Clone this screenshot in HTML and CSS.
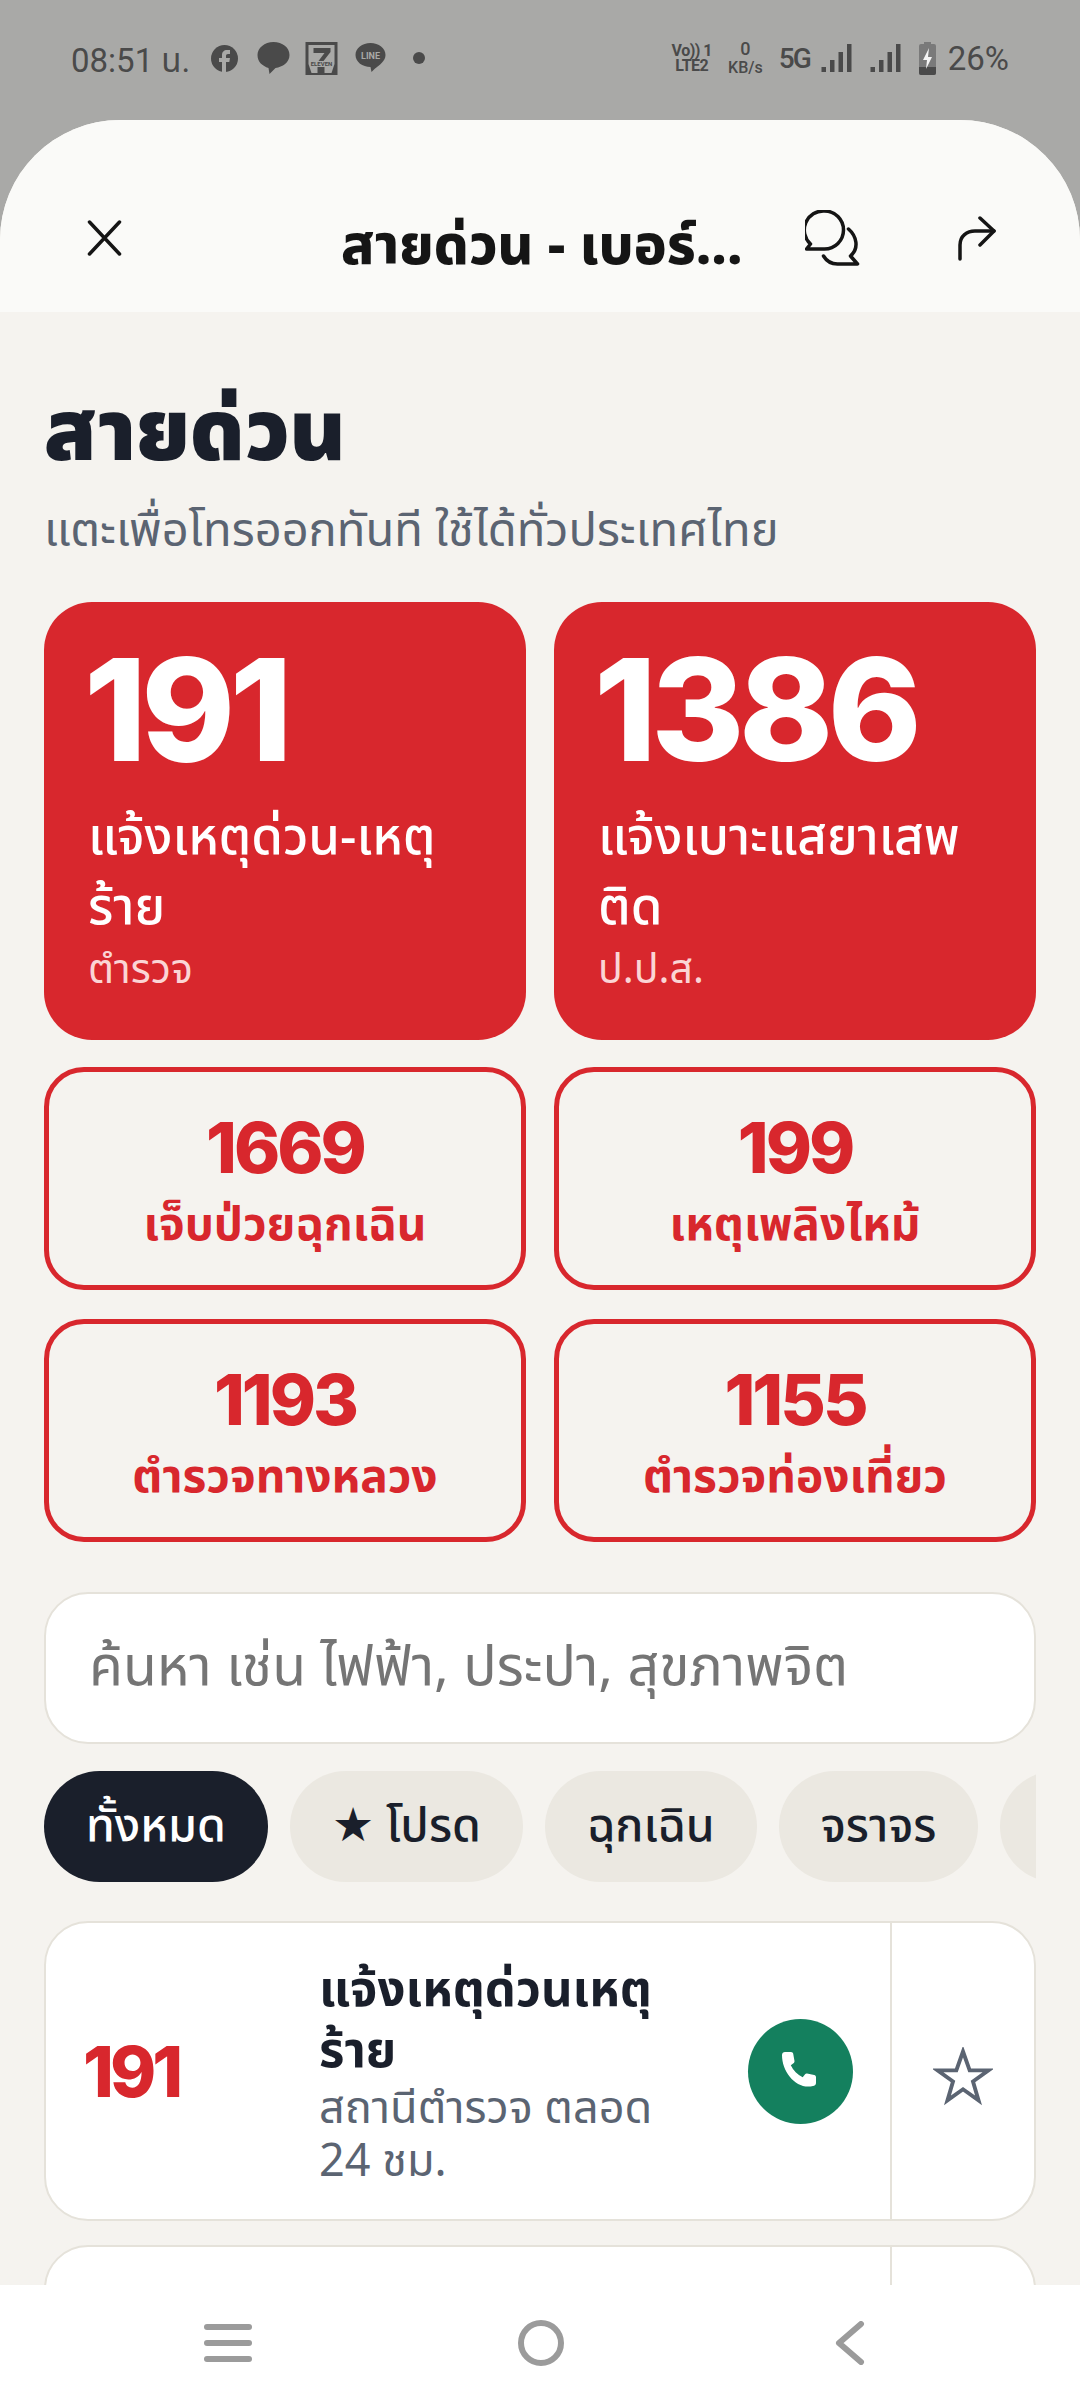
FILE: index.html
```html
<!DOCTYPE html>
<html lang="th">
<head>
    <meta charset="UTF-8">
    <meta name="viewport" content="width=device-width, initial-scale=1.0">
    <title>สายด่วน</title>
    <link rel="stylesheet" href="styles.css">
</head>
<body>
    <div class="phone">
        <div class="status-bar">
            <div class="status-left">
                <span class="clock">08:51 น.</span>
                <svg class="ic-fb" viewBox="0 0 27 27"><circle cx="13.500" cy="13.500" r="13.500" fill="#4a4a4a"/><path d="M11 27V17H8v-4h3v-3c0-3 2-5 5-5h3v4h-2c-1.300 0-2 .7-2 2v2h4l-.7 4H15v10z" fill="#a9a9a7"/></svg>
                <svg class="ic-bubble" viewBox="0 0 32 32"><path d="M16 0c9 0 16 5.500 16 13s-7 12-14 13l-6 6-1-6C5 24 0 20 0 13S7 0 16 0z" fill="#4a4a4a"/></svg>
                <svg class="ic-seven" viewBox="0 0 32 33"><rect width="32" height="33" fill="#4a4a4a"/><path d="M3 3h26v19l-3 9H6l-3-9z" fill="#a9a9a7"/><path d="M8 6h17v4l-7 9h-5l6-8H8z" fill="#4a4a4a"/><text x="16" y="24" class="seven-text">ELEVEN</text><rect x="12" y="25" width="7" height="7" fill="#4a4a4a"/></svg>
                <svg class="ic-line" viewBox="0 0 30 30"><path d="M15 0c8.300 0 15 5.200 15 12 0 6-6 10-11 14l-3 3-1-5C7 24 0 19 0 12 0 5.200 6.700 0 15 0z" fill="#4a4a4a"/><text x="15" y="16" class="line-text">LINE</text></svg>
                <span class="status-dot"></span>
            </div>
            <div class="status-right">
                <div class="volte"><span>Vo)) 1</span><span>LTE2</span></div>
                <div class="speed"><span>0</span><span>KB/s</span></div>
                <span class="net">5G</span>
                <svg class="ic-signal" viewBox="0 0 30 28"><rect x="0" y="23" width="4.500" height="5"/><rect x="8.500" y="16" width="4.500" height="12"/><rect x="17" y="8" width="4.500" height="20"/><rect x="25.500" y="0" width="4.500" height="28"/></svg>
                <svg class="ic-signal" viewBox="0 0 30 28"><rect x="0" y="23" width="4.500" height="5"/><rect x="8.500" y="16" width="4.500" height="12"/><rect x="17" y="8" width="4.500" height="20"/><rect x="25.500" y="0" width="4.500" height="28"/></svg>
                <svg class="ic-battery" viewBox="0 0 17 33"><path d="M5 0h7v2h3a2 2 0 0 1 2 2v27a2 2 0 0 1-2 2H2a2 2 0 0 1-2-2V4a2 2 0 0 1 2-2h3z" fill="#7a7a7a"/><path d="M0 25h17v6a2 2 0 0 1-2 2H2a2 2 0 0 1-2-2z" fill="#4a4a4a"/><path d="M10 6l-6 12h4l-1 9 6-12H9z" fill="#f4f4f4"/></svg>
                <span class="battery-pct">26%</span>
            </div>
        </div>

        <div class="sheet">
            <header class="sheet-head">
                <svg class="ic-close" viewBox="0 0 34 36"><path d="M2 2l30 32M32 2L2 34"/></svg>
                <div class="sheet-title">สายด่วน - เบอร์...</div>
                <svg class="ic-chat" viewBox="0 0 54 56"><path d="M19 1a19 19 0 0 1 0 38H1l4-5A19 19 0 0 1 19 1z"/><path d="M43 19c8 7 11 19 2 27l7 8H32c-6 0-11-3-14-8"/></svg>
                <svg class="ic-share" viewBox="0 0 38 45"><path d="M2 43V29c0-9 7-14 15-14h19"/><path d="M22 2l14 13-14 14"/></svg>
            </header>

            <main class="content">
                <h1 class="page-title">สายด่วน</h1>
                <p class="page-sub">แตะเพื่อโทรออกทันที ใช้ได้ทั่วประเทศไทย</p>

                <div class="hot-grid">
                    <div class="hot-card">
                        <div class="hot-num">191</div>
                        <div class="hot-name">แจ้งเหตุด่วน-เหตุร้าย</div>
                        <div class="hot-org">ตำรวจ</div>
                    </div>
                    <div class="hot-card">
                        <div class="hot-num">1386</div>
                        <div class="hot-name">แจ้งเบาะแสยาเสพติด</div>
                        <div class="hot-org">ป.ป.ส.</div>
                    </div>
                </div>

                <div class="line-grid">
                    <div class="line-card"><div class="line-num">1669</div><div class="line-name">เจ็บป่วยฉุกเฉิน</div></div>
                    <div class="line-card"><div class="line-num">199</div><div class="line-name">เหตุเพลิงไหม้</div></div>
                    <div class="line-card"><div class="line-num">1193</div><div class="line-name">ตำรวจทางหลวง</div></div>
                    <div class="line-card"><div class="line-num">1155</div><div class="line-name">ตำรวจท่องเที่ยว</div></div>
                </div>

                <div class="search">ค้นหา เช่น ไฟฟ้า, ประปา, สุขภาพจิต</div>

                <div class="chips">
                    <span class="chip active">ทั้งหมด</span>
                    <span class="chip">★ โปรด</span>
                    <span class="chip">ฉุกเฉิน</span>
                    <span class="chip">จราจร</span>
                    <span class="chip chip-cut"></span>
                </div>

                <div class="row-card">
                    <div class="row-main">
                        <div class="row-num">191</div>
                        <div class="row-text">
                            <div class="row-name">แจ้งเหตุด่วนเหตุร้าย</div>
                            <div class="row-desc">สถานีตำรวจ ตลอด 24 ชม.</div>
                        </div>
                        <div class="call-btn">
                            <svg viewBox="0 0 38 38"><path d="M3 0h6c1.200 0 2 .7 2.200 1.800l1.300 7.200c.1.800-.1 1.400-.7 1.900l-3 2.400c2.500 5.300 6.600 9.500 11.900 12l2.400-3c.5-.6 1.100-.8 1.900-.7l7.200 1.300c1.100.2 1.800 1 1.800 2.200v6c0 1.700-1.300 2.900-3 2.900C15 38 0 21 0 3c0-1.700 1.300-3 3-3z"/></svg>
                        </div>
                    </div>
                    <div class="row-fav">
                        <svg viewBox="0 0 54 53"><path d="M27 4l6 17h17L36 31l5 17-14-10-14 10 5-17L4 21h17z"/></svg>
                    </div>
                </div>
                <div class="row-card"><div class="row-main"></div><div class="row-fav"></div></div>
            </main>
        </div>

        <nav class="nav-bar">
            <svg class="ic-menu" viewBox="0 0 48 38"><rect y="0" width="48" height="6" rx="3"/><rect y="16" width="48" height="6" rx="3"/><rect y="32" width="48" height="6" rx="3"/></svg>
            <svg class="ic-home" viewBox="0 0 46 46"><circle cx="23" cy="23" r="20"/></svg>
            <svg class="ic-back" viewBox="0 0 30 44"><path d="M26 3L4 22l22 19"/></svg>
        </nav>
    </div>
</body>
</html>
```

FILE: styles.css
```css
* {
    box-sizing: border-box;
}
body, html {
    margin: 0;
    padding: 0;
    height: 2400px;
    overflow: hidden;
    background-color: #a9a9a7;
    font-family: 'Noto Sans', 'Noto Sans Thai', sans-serif;
}
.phone {
    display: flex;
    flex-direction: column;
    width: 1080px;
    height: 2400px;
}

/* status bar */
.status-bar {
    flex: 0 0 120px;
    display: flex;
    justify-content: space-between;
    padding: 36px 71px 0 71px;
    color: #4a4a4a;
    font-family: Roboto, 'Noto Sans Thai', sans-serif;
}
.status-left, .status-right {
    display: flex;
    align-items: center;
    height: 44px;
}
.clock {
    width: 140px;
    font-size: 33px;
    padding-top: 8px;
    white-space: nowrap;
}
.ic-fb {
    width: 27px;
    height: 27px;
    margin-right: 19px;
}
.ic-bubble {
    width: 33px;
    height: 32px;
    margin-right: 15px;
}
.ic-seven {
    width: 33px;
    height: 33px;
    margin-right: 17px;
}
.seven-text {
    font-size: 6px;
    font-weight: 700;
    fill: #4a4a4a;
    text-anchor: middle;
}
.ic-line {
    width: 31px;
    height: 30px;
    margin-right: 27px;
}
.line-text {
    font-size: 9px;
    font-weight: 700;
    fill: #a9a9a7;
    text-anchor: middle;
}
.status-dot {
    width: 12px;
    height: 12px;
    border-radius: 50%;
    background-color: #4a4a4a;
}
.volte, .speed {
    display: flex;
    flex-direction: column;
    align-items: center;
    font-weight: 700;
    margin-right: 16px;
    white-space: nowrap;
}
.volte {
    font-size: 16px;
    line-height: 15px;
    letter-spacing: -0.5px;
}
.speed {
    font-size: 16px;
    line-height: 19px;
    font-weight: 500;
}
.speed span:first-child {
    font-size: 18px;
}
.net {
    font-size: 28px;
    font-weight: 500;
    letter-spacing: -2px;
    margin-right: 11px;
}
.ic-signal {
    width: 31px;
    height: 28px;
    margin-right: 18px;
    fill: #4a4a4a;
}
.ic-battery {
    width: 17px;
    height: 33px;
    margin-right: 12px;
}
.battery-pct {
    font-size: 33px;
}

/* sheet */
.sheet {
    flex: 1;
    min-height: 0;
    display: flex;
    flex-direction: column;
    background-color: #f5f3ef;
    border-radius: 120px 120px 0 0;
    overflow: hidden;
}
.sheet-head {
    flex: 0 0 192px;
    display: flex;
    align-items: center;
    background-color: #fafaf8;
    padding: 44px 0 0 87px;
}
.ic-close {
    flex: none;
    width: 35px;
    height: 36px;
    fill: none;
    stroke: #151515;
    stroke-width: 3.500;
    stroke-linecap: round;
}
.sheet-title {
    flex: 0 0 397px;
    min-width: 0;
    margin-left: 219px;
    padding-top: 10px;
    font-size: 55px;
    line-height: 70px;
    font-weight: 800;
    color: #151515;
    white-space: nowrap;
}
.ic-chat {
    flex: none;
    width: 55px;
    height: 56px;
    margin-left: 67px;
    fill: none;
    stroke: #151515;
    stroke-width: 3.500;
    stroke-linecap: round;
    stroke-linejoin: round;
}
.ic-share {
    flex: none;
    width: 38px;
    height: 45px;
    margin-left: 98px;
    fill: none;
    stroke: #151515;
    stroke-width: 3.500;
    stroke-linecap: round;
    stroke-linejoin: round;
}
.content {
    flex: 1;
    min-height: 0;
    overflow: hidden;
    padding: 65px 44px 0;
}
.page-title {
    margin: 0;
    font-size: 85px;
    line-height: 100px;
    font-weight: 900;
    color: #1a1f2b;
}
.page-sub {
    margin: 21px 0 0;
    font-size: 47px;
    line-height: 60px;
    color: #5b6472;
    white-space: nowrap;
}

/* big cards */
.hot-grid, .line-grid {
    display: grid;
    grid-template-columns: 482px 482px;
    gap: 29px 28px;
}
.hot-grid {
    margin-top: 44px;
}
.hot-card {
    height: 438px;
    padding: 32px 44px;
    background-color: #d8272d;
    border-radius: 48px;
    color: #fff;
}
.hot-num {
    margin-left: -4px;
    font-family: Inter, sans-serif;
    font-size: 142px;
    line-height: 150px;
    font-weight: 800;
    letter-spacing: -5.500px;
}
.hot-name {
    margin-top: 15px;
    font-size: 51px;
    line-height: 70px;
    font-weight: 500;
}
.hot-org {
    margin-top: 3px;
    font-size: 41px;
    line-height: 50px;
    color: #fbd5d5;
}

/* outlined cards */
.line-grid {
    margin-top: 27px;
}
.line-card {
    height: 223px;
    padding-top: 36px;
    background-color: #f5f3ef;
    border: 5px solid #d8272d;
    border-radius: 40px;
    text-align: center;
    color: #d8272d;
}
.line-num {
    font-family: Inter, sans-serif;
    font-size: 70px;
    line-height: 80px;
    font-weight: 800;
    letter-spacing: -3px;
}
.line-name {
    margin-top: 3px;
    font-size: 46px;
    line-height: 62px;
    font-weight: 700;
}

/* search + chips */
.search {
    margin-top: 50px;
    height: 152px;
    padding: 0 43px;
    display: flex;
    align-items: center;
    background-color: #fff;
    border: 2px solid #e5e2da;
    border-radius: 44px;
    font-size: 55.300px;
    color: #757575;
    white-space: nowrap;
}
.chips {
    display: flex;
    gap: 22px;
    margin-top: 27px;
    overflow: hidden;
}
.chip {
    flex: none;
    height: 111px;
    padding: 0 42px;
    display: flex;
    align-items: center;
    background-color: #ebe8e1;
    border-radius: 56px;
    font-size: 46.500px;
    font-weight: 500;
    color: #1a1f2b;
}
.chip.active {
    background-color: #1a1f2b;
    color: #fff;
}
.chip-cut {
    width: 200px;
}

/* list */
.row-card {
    display: flex;
    height: 300px;
    margin-top: 39px;
    background-color: #fff;
    border: 2px solid #e5e2da;
    border-radius: 44px;
    overflow: hidden;
}
.row-card + .row-card {
    margin-top: 24px;
}
.row-main {
    flex: 1;
    display: flex;
    align-items: center;
    padding: 0 37px;
    border-right: 2px solid #e5e2da;
}
.row-num {
    flex: 0 0 236px;
    font-family: Inter, sans-serif;
    font-size: 70px;
    font-weight: 800;
    letter-spacing: -4px;
    color: #d8272d;
}
.row-text {
    flex: 1;
    padding-right: 44px;
}
.row-name {
    font-size: 49px;
    line-height: 61px;
    font-weight: 700;
    color: #1a1f2b;
}
.row-desc {
    font-size: 45px;
    line-height: 53px;
    color: #5b6472;
}
.call-btn {
    flex: none;
    width: 105px;
    height: 105px;
    display: flex;
    align-items: center;
    justify-content: center;
    background-color: #14805e;
    border-radius: 50%;
}
.call-btn svg {
    width: 38px;
    height: 38px;
    fill: #fff;
}
.row-fav {
    flex: 0 0 142px;
    display: flex;
    align-items: center;
    justify-content: center;
    padding-top: 10px;
}
.row-fav svg {
    width: 60px;
    height: 59px;
    fill: none;
    stroke: #5b6472;
    stroke-width: 3.500;
    stroke-linejoin: miter;
}

/* nav */
.nav-bar {
    flex: 0 0 115px;
    display: flex;
    align-items: center;
    background-color: #fff;
    padding: 0 0 0 204px;
}
.ic-menu {
    width: 48px;
    height: 38px;
    fill: #9b9b9b;
}
.ic-home {
    width: 46px;
    height: 46px;
    margin-left: 266px;
    fill: none;
    stroke: #9b9b9b;
    stroke-width: 6;
}
.ic-back {
    width: 30px;
    height: 44px;
    margin-left: 271px;
    fill: none;
    stroke: #9b9b9b;
    stroke-width: 6;
    stroke-linecap: round;
    stroke-linejoin: round;
}
```
